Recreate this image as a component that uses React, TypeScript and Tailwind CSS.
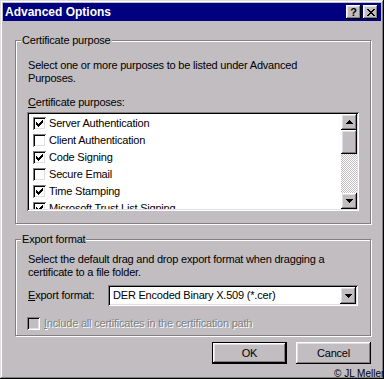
import React from 'react';

const BG = 'bg-[#c1bdc1]';
const raised =
  'shadow-[inset_-1px_-1px_0_#000,inset_1px_1px_0_#fff,inset_-2px_-2px_0_#808080,inset_2px_2px_0_#dfdfdf]';
const sunken =
  'shadow-[inset_1px_1px_0_#808080,inset_-1px_-1px_0_#fff,inset_2px_2px_0_#000,inset_-2px_-2px_0_#dfdfdf]';
const etched = 'border border-[#808080] shadow-[1px_1px_0_#fff,inset_1px_1px_0_#fff]';

const PURPOSES = [
  { label: 'Server Authentication', checked: true },
  { label: 'Client Authentication', checked: false },
  { label: 'Code Signing', checked: true },
  { label: 'Secure Email', checked: false },
  { label: 'Time Stamping', checked: true },
  { label: 'Microsoft Trust List Signing', checked: true },
];

function CheckMark() {
  return (
    <svg width="7" height="7" viewBox="0 0 7 7" shapeRendering="crispEdges">
      <path
        d="M6 0h1v3H6v1H5v1H4v1H3v1H2V6H1V5H0V2h1v1h1v1h1V3h1V2h1V1h1z"
        fill="#000"
      />
    </svg>
  );
}

function Checkbox({ checked, disabled }: { checked?: boolean; disabled?: boolean }) {
  return (
    <span
      className={`w-[13px] h-[13px] shrink-0 flex items-center justify-center ${
        disabled ? BG : 'bg-white'
      } ${sunken}`}
    >
      {checked && <CheckMark />}
    </span>
  );
}

function Arrow({ dir }: { dir: 'up' | 'down' }) {
  return (
    <svg width="7" height="4" viewBox="0 0 7 4" shapeRendering="crispEdges">
      <path
        d={
          dir === 'up'
            ? 'M3 0h1v1h1v1h1v1h1v1H0V3h1V2h1V1h1z'
            : 'M0 0h7v1H6v1H5v1H4v1H3V3H2V2H1V1H0z'
        }
        fill="#000"
      />
    </svg>
  );
}

function CloseGlyph() {
  return (
    <svg width="8" height="7" viewBox="0 0 8 7" shapeRendering="crispEdges">
      <path
        d="M0 0h2v1h1v1h2V1h1V0h2v1H7v1H6v1H5v1h1v1h1v1h1v1H6V6H5V5H3v1H2v1H0V6h1V5h1V4h1V3H2V2H1V1H0z"
        fill="#000"
      />
    </svg>
  );
}

function Button({ label, isDefault }: { label: string; isDefault?: boolean }) {
  return (
    <div className={`w-[75px] h-[22px] ${isDefault ? 'border border-black' : ''}`}>
      <div className={`w-full h-full flex items-center justify-center ${BG} ${raised}`}>
        <span className="text-[11px] leading-[13px]">{label}</span>
      </div>
    </div>
  );
}

export default function App() {
  return (
    <div
      className={`relative w-[384px] h-[379px] p-[3px] overflow-hidden ${BG} text-black text-[11px] tracking-[-0.2px] font-['Liberation_Sans',Arial,sans-serif] shadow-[inset_-1px_-1px_0_#000,inset_1px_1px_0_#dfdfdf,inset_-2px_-2px_0_#808080,inset_2px_2px_0_#fff]`}
    >
      {/* Title bar */}
      <div className="h-[18px] bg-[#000080] flex items-center justify-between pl-[2px] pr-[3px]">
        <span className="text-white font-bold text-[12px] leading-[14px] tracking-normal">
          Advanced Options
        </span>
        <div className="flex items-center gap-[2px]">
          <div className={`w-[15px] h-[14px] flex items-center justify-center ${BG} ${raised}`}>
            <span className="font-bold text-[11px] leading-[11px]">?</span>
          </div>
          <div className={`w-[15px] h-[14px] flex items-center justify-center ${BG} ${raised}`}>
            <CloseGlyph />
          </div>
        </div>
      </div>

      {/* Certificate purpose */}
      <div className={`ml-[12px] mt-[19px] w-[356px] h-[184px] flex flex-col px-[12px] ${etched}`}>
        <span className={`-mt-[7px] -ml-[7px] px-[1px] self-start leading-[13px] ${BG}`}>
          Certificate purpose
        </span>
        <p className="mt-[12px] leading-[13px]">
          Select one or more purposes to be listed under Advanced
          <br />
          Purposes.
        </p>
        <p className="mt-[11px] leading-[13px]">
          <span className="underline">C</span>ertificate purposes:
        </p>
        <div className={`-ml-[1px] mt-[3px] w-[332px] h-[99px] p-[2px] flex bg-white ${sunken}`}>
          <div className="flex-1 overflow-hidden flex flex-col pt-[1px]">
            {PURPOSES.map((p, i) => (
              <div key={i} className="h-[17px] shrink-0 flex items-center pl-[4px] gap-[3px]">
                <Checkbox checked={p.checked} />
                <span className="leading-[13px] whitespace-nowrap">{p.label}</span>
              </div>
            ))}
          </div>
          <div className="w-[16px] flex flex-col">
            <div className={`h-[16px] flex items-center justify-center ${BG} ${raised}`}>
              <Arrow dir="up" />
            </div>
            <div className={`h-[24px] ${BG} ${raised}`} />
            <div className="flex-1 bg-[repeating-conic-gradient(#c1bdc1_0_25%,#fff_0_50%)] bg-[length:2px_2px]" />
            <div className={`h-[16px] flex items-center justify-center ${BG} ${raised}`}>
              <Arrow dir="down" />
            </div>
          </div>
        </div>
      </div>

      {/* Export format */}
      <div className={`ml-[12px] mt-[15px] w-[356px] h-[97px] flex flex-col px-[12px] ${etched}`}>
        <span className={`-mt-[7px] -ml-[7px] px-[1px] self-start leading-[13px] ${BG}`}>
          Export format
        </span>
        <p className="mt-[7px] leading-[13px]">
          Select the default drag and drop export format when dragging a
          <br />
          certificate to a file folder.
        </p>
        <div className="mt-[6px] flex items-center">
          <span className="w-[80px] shrink-0 leading-[13px]">
            <span className="underline">E</span>xport format:
          </span>
          <div className={`w-[251px] h-[21px] p-[2px] flex bg-white ${sunken}`}>
            <span className="flex-1 pl-[3px] flex items-center leading-[13px] whitespace-nowrap">
              DER Encoded Binary X.509 (*.cer)
            </span>
            <div className={`w-[16px] h-full flex items-center justify-center ${BG} ${raised}`}>
              <Arrow dir="down" />
            </div>
          </div>
        </div>
        <div className="mt-[11px] -ml-[1px] flex items-center gap-[4px]">
          <Checkbox disabled />
          <span className="leading-[13px] text-[#808080] [text-shadow:1px_1px_0_#fff]">
            <span className="underline">I</span>nclude all certificates in the certification path
          </span>
        </div>
      </div>

      {/* Buttons */}
      <div className="mt-[6px] mr-[10px] flex justify-end gap-[9px]">
        <Button label="OK" isDefault />
        <Button label="Cancel" />
      </div>

      <span className="absolute left-[334px] top-[369px] text-[10px] leading-[10px] tracking-normal whitespace-nowrap">
        © JL Meller
      </span>
    </div>
  );
}
